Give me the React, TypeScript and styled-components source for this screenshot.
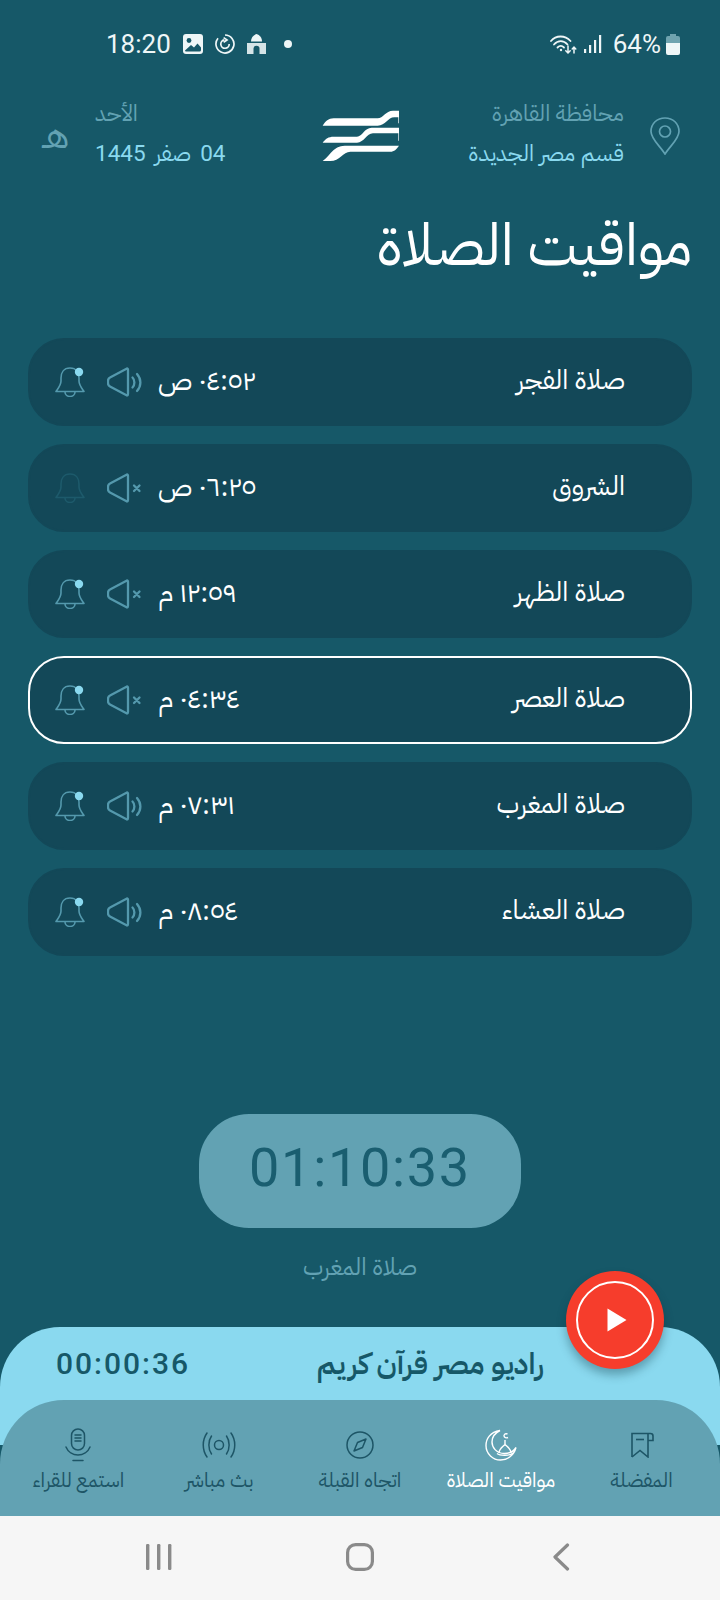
import React from 'react';
import styled, { createGlobalStyle } from 'styled-components';

const ARABIC = '"IBM Plex Sans Arabic", "Noto Sans Arabic", "DejaVu Sans", sans-serif';

const colors = {
  bg: '#165868',
  row: '#134858',
  sky: '#8ad9ef',
  muted: '#62a2b3',
  icon: '#5499ad',
};

const GlobalStyle = createGlobalStyle`
  html, body {
    margin: 0;
    padding: 0;
    background: ${colors.bg};
  }
  * {
    box-sizing: border-box;
  }
`;

const Page = styled.div`
  width: 720px;
  height: 1600px;
  background: ${colors.bg};
  display: flex;
  flex-direction: column;
  overflow: hidden;
  font-family: ${ARABIC};
`;

const StatusBar = styled.div`
  height: 86px;
  padding: 2px 40px 0 106px;
  display: flex;
  align-items: center;
  justify-content: space-between;
  color: #eef6f7;
  font-family: Roboto, sans-serif;
  font-size: 26px;
`;

const StatusGroup = styled.div`
  display: flex;
  align-items: center;
  gap: ${(p: { $gap: number }) => p.$gap}px;
`;

const StatusDot = styled.span`
  width: 8px;
  height: 8px;
  margin-left: 6px;
  border-radius: 50%;
  background: #eef6f7;
`;

const BatteryText = styled.span`
  margin: 0 -2px 0 4px;
`;

const Header = styled.header`
  height: 100px;
  padding: 0 40px 0 42px;
  display: grid;
  grid-template-columns: 1fr 80px 1fr;
  align-items: center;
`;

const HeaderSide = styled.div<{ $end?: boolean }>`
  display: flex;
  align-items: center;
  justify-content: ${(p) => (p.$end ? 'flex-end' : 'flex-start')};
  gap: 26px;
`;

const HijriMark = styled.span`
  color: ${colors.muted};
  font-size: 36px;
  line-height: 40px;
  width: 27px;
  direction: rtl;
`;

const HeaderText = styled.div<{ $end?: boolean }>`
  direction: rtl;
  display: flex;
  flex-direction: column;
  gap: 12px;
  margin-top: -7px;
  align-items: ${(p) => (p.$end ? 'flex-start' : 'flex-end')};
`;

const HeaderLine = styled.div<{ $sky?: boolean; $spaced?: boolean }>`
  font-family: Roboto, ${ARABIC};
  font-size: 22.5px;
  line-height: 28px;
  white-space: nowrap;
  word-spacing: ${(p) => (p.$spaced ? 3.5 : 0)}px;
  color: ${(p) => (p.$sky ? colors.sky : colors.muted)};
`;

const Title = styled.h1`
  margin: 25px 0 0;
  padding: 0 28px;
  direction: rtl;
  color: #fff;
  font-size: 58px;
  font-weight: 400;
  line-height: 70px;
`;

const PrayerList = styled.div`
  margin-top: 57px;
  padding: 0 28px;
  display: flex;
  flex-direction: column;
  gap: 18px;
`;

const PrayerRow = styled.div<{ $active?: boolean }>`
  height: 88px;
  border-radius: 36px;
  background: ${colors.row};
  border: 2px solid ${(p) => (p.$active ? '#fff' : colors.row)};
  padding: 0 65px 0 25px;
  display: flex;
  align-items: center;
`;

const RowIcons = styled.div`
  display: flex;
  align-items: center;
  gap: 22px;
`;

const PrayerTime = styled.div`
  margin-left: 15px;
  padding-bottom: 4px;
  direction: rtl;
  color: #fff;
  font-size: 27.5px;
  white-space: nowrap;
`;

const PrayerName = styled.div`
  margin-left: auto;
  padding-bottom: 4px;
  direction: rtl;
  color: #fff;
  font-size: 27px;
  white-space: nowrap;
`;

const CountdownWrap = styled.div`
  margin-top: 158px;
  display: flex;
  flex-direction: column;
  align-items: center;
`;

const Countdown = styled.div`
  width: 322px;
  height: 114px;
  border-radius: 50px;
  background: ${colors.muted};
  color: #1a5e70;
  font-family: Roboto, sans-serif;
  font-size: 54px;
  letter-spacing: 1.7px;
  display: flex;
  justify-content: center;
  padding-top: 22px;
`;

const CountdownLabel = styled.div`
  margin-top: 21px;
  direction: rtl;
  color: ${colors.muted};
  font-size: 24px;
`;

const Footer = styled.div`
  margin-top: auto;
  position: relative;
`;

const RadioPanel = styled.div`
  height: 118px;
  border-radius: 60px 60px 0 0;
  background: ${colors.sky};
  padding: 12px 176px 0 56px;
  display: flex;
  align-items: flex-start;
  justify-content: space-between;
  color: ${colors.bg};
`;

const RadioClock = styled.div`
  font-family: Roboto, sans-serif;
  font-size: 30px;
  font-weight: 500;
  letter-spacing: 2px;
  line-height: 50px;
`;

const RadioTitle = styled.div`
  direction: rtl;
  font-size: 29.5px;
  font-weight: 600;
  line-height: 50px;
  white-space: nowrap;
`;

const PlayButton = styled.div`
  position: absolute;
  left: 566px;
  top: -56px;
  width: 98px;
  height: 98px;
  border-radius: 50%;
  background: #f63d2c;
  box-shadow: 0 6px 10px rgba(10, 50, 60, 0.35);
  display: flex;
  align-items: center;
  justify-content: center;
`;

const PlayRing = styled.div`
  width: 78px;
  height: 78px;
  border-radius: 50%;
  border: 2px solid #fff;
  padding-left: 4px;
  display: flex;
  align-items: center;
  justify-content: center;
`;

const TabPanel = styled.nav`
  height: 116px;
  margin-top: -45px;
  position: relative;
  border-radius: 64px 64px 0 0;
  background: ${colors.muted};
  padding: 27px 8px 0;
  display: grid;
  grid-template-columns: repeat(5, 1fr);
`;

const Tab = styled.div<{ $active?: boolean }>`
  display: flex;
  flex-direction: column;
  align-items: center;
  color: ${(p) => (p.$active ? '#fff' : '#1d5566')};
`;

const TabIcon = styled.div`
  height: 36px;
  display: flex;
  align-items: center;
  justify-content: center;
`;

const TabLabel = styled.div`
  margin-top: 4px;
  direction: rtl;
  font-size: 20px;
  line-height: 26px;
  white-space: nowrap;
`;

const SystemNav = styled.div`
  height: 84px;
  background: #f6f6f6;
  padding-bottom: 2px;
  display: grid;
  grid-template-columns: repeat(3, 201px);
  justify-content: center;
  align-items: center;
  justify-items: center;
`;

const ImageIcon = () => (
  <svg width="20" height="20" viewBox="0 0 20 20">
    <rect width="20" height="20" rx="3" fill="#eef6f7" />
    <circle cx="6" cy="6.5" r="2.4" fill={colors.bg} />
    <path d="M2 16.5 L8 11 L11 13.5 L14.5 9.5 L18 13.5 V16 Q18 17.5 16.5 17.5 H3 Q2 17.5 2 16.5Z" fill={colors.bg} />
  </svg>
);

const SyncIcon = () => (
  <svg width="20" height="20" viewBox="0 0 20 20" fill="none" stroke="#eef6f7" strokeWidth="1.7">
    <path d="M10 1 A9 9 0 1 1 3 4.3" />
    <path d="M14.2 10 A4.2 4.2 0 1 1 9.4 5.9" />
    <path d="M8.6 3.6 L12 5.9 L8.6 8.2" />
  </svg>
);

const MosqueIcon = () => (
  <svg width="19" height="20" viewBox="0 0 19 20">
    <path d="M9.5 0 C6 1 4 4 4 7.5 H15 C15 4 13 1 9.5 0Z" fill="#eef6f7" />
    <path d="M0 9 H19 V20 H12.5 V14.5 Q12.5 11.8 9.5 11.8 Q6.5 11.8 6.5 14.5 V20 H0Z" fill="#d5e4e7" />
  </svg>
);

const WifiIcon = () => (
  <svg width="27" height="19" viewBox="0 0 27 19" fill="none" stroke="#eef6f7" strokeWidth="1.8" strokeLinecap="round">
    <path d="M1 6 C6 0 15 0 20.5 6" />
    <path d="M4 9.5 C8 5 13.5 5 17.5 9.5" />
    <path d="M7.5 12.5 C9.5 10.5 12 10.5 14 12.5" />
    <circle cx="11" cy="15" r="1.2" fill="#eef6f7" stroke="none" />
    <path d="M18 11 V18 M15.8 15.8 L18 18 L20.2 15.8" strokeWidth="1.5" />
    <path d="M24 18 V12 M22.2 14 L24 12 L25.8 14" strokeWidth="1.5" />
  </svg>
);

const SignalIcon = () => (
  <svg width="18" height="18" viewBox="0 0 18 18" fill="#eef6f7">
    <rect x="0" y="14" width="2.2" height="4" />
    <rect x="5" y="10" width="2.2" height="8" />
    <rect x="10" y="5" width="2.2" height="13" />
    <rect x="15" y="0" width="2.2" height="18" />
  </svg>
);

const BatteryIcon = () => (
  <svg width="14" height="21" viewBox="0 0 14 21">
    <path d="M4 0 H10 V2 H12 Q14 2 14 4 V9 H0 V4 Q0 2 2 2 H4Z" fill="#6fa3af" />
    <path d="M0 9 H14 V19 Q14 21 12 21 H2 Q0 21 0 19Z" fill="#eef6f7" />
  </svg>
);

const PinIcon = () => (
  <svg width="30" height="38" viewBox="0 0 30 38" fill="none" stroke={colors.muted} strokeWidth="1.7">
    <path d="M15 37 C10 29 1 22 1 14.5 C1 6.5 7 1 15 1 C23 1 29 6.5 29 14.5 C29 22 20 29 15 37Z" />
    <circle cx="15" cy="14.5" r="5.5" />
  </svg>
);

const Logo = () => (
  <svg width="80" height="52" viewBox="66 60 232 156" fill="#fff">
    <path d="M67 107 C76 94 84 85 100 85 H232 C248 85 256 62 278 62 H296 V100 H294 V82 H282 C262 82 256 107 232 107Z" />
    <path d="M67 158 C76 146 84 140 100 140 H170 C186 140 192 113 214 113 H296 V152 H294 V130 H218 C198 130 192 158 170 158Z" />
    <path d="M67 213 C80 205 88 190 100 180 C112 170 120 167 140 167 H296 C288 178 282 185 270 185 H150 C128 185 118 213 90 213Z" />
  </svg>
);

const BellIcon = ({ off }: { off?: boolean }) => {
  const stroke = off ? '#1d5a6b' : colors.icon;
  return (
    <svg width="30" height="30" viewBox="0 0 30 30" fill="none" stroke={stroke} strokeWidth="1.6" strokeLinecap="round">
      <path d="M15 1 C8.5 1 6 6 6 11 V14 C6 18 3.5 21 1 24.5 H29 C26.5 21 24 18 24 14 V11 C24 6 21.5 1 15 1Z" strokeLinejoin="round" />
      <path d="M10 25 A5 4.5 0 0 0 20 25" />
      {!off && <circle cx="24" cy="5" r="4.2" fill={colors.sky} stroke="none" />}
    </svg>
  );
};

const SpeakerIcon = ({ muted }: { muted?: boolean }) => (
  <svg width="36" height="30" viewBox="0 0 36 30" fill="none" stroke={colors.icon} strokeWidth="2.3" strokeLinecap="round">
    <path d="M20 1.5 L3 10.5 Q1 11.5 1 14 V16 Q1 18.5 3 19.5 L20 28.5 Q21 28.5 21 27 V3 Q21 1.5 20 1.5Z" strokeLinejoin="round" />
    {muted ? (
      <path d="M27 12.5 L32.5 18 M32.5 12.5 L27 18" />
    ) : (
      <>
        <path d="M25.5 10.5 C28 13 28 18 25.5 20.5" />
        <path d="M30 7 C34.5 12 34.5 19 30 24" />
      </>
    )}
  </svg>
);

const BookmarkIcon = () => (
  <svg width="24" height="26" viewBox="0 0 24 26" fill="none" stroke="currentColor" strokeWidth="1.6">
    <path d="M2 25 V1.5 H20.5 Q23 1.5 23 4 V8.5 H18" />
    <path d="M18 1.5 V25 L10 18.5 L2 25" />
    <path d="M6 7.5 H14" />
  </svg>
);

const MoonIcon = () => (
  <svg width="32" height="32" viewBox="0 0 32 32" fill="none" stroke="currentColor" strokeWidth="1.4">
    <path d="M15 1.5 C5 3 1 10 1 16.5 C1 25 8 31 15.5 31 C23 31 29 26 31 18.5 C28 23 24 24.5 19.5 24.5 C11 24.5 7 18 7 13 C7 8 10 4 15 1.5Z" />
    <path d="M14 24 C14 20 17 18.5 20 15.5 C23 18.5 26 20 26 24" />
    <path d="M12 24.5 C15 27 25 27 28 24" />
    <path d="M20 15 V11 M22.5 5 C20 4 18 6 19.5 8 C21 9.5 23 8.5 23 8.5" />
  </svg>
);

const CompassIcon = () => (
  <svg width="28" height="28" viewBox="0 0 28 28" fill="none" stroke="currentColor" strokeWidth="1.5">
    <circle cx="14" cy="14" r="13" />
    <path d="M20 8 L16.5 16.5 L8 20 L11.5 11.5Z" strokeLinejoin="round" />
  </svg>
);

const BroadcastIcon = () => (
  <svg width="34" height="26" viewBox="0 0 34 26" fill="none" stroke="currentColor" strokeWidth="1.5" strokeLinecap="round">
    <circle cx="17" cy="13" r="4.5" />
    <path d="M9.5 4 C6 9 6 17 9.5 22" />
    <path d="M24.5 4 C28 9 28 17 24.5 22" />
    <path d="M5 1 C0 8 0 18 5 25" />
    <path d="M29 1 C34 8 34 18 29 25" />
  </svg>
);

const MicIcon = () => (
  <svg width="26" height="34" viewBox="0 0 26 34" fill="none" stroke="currentColor" strokeWidth="1.5" strokeLinecap="round">
    <rect x="6.5" y="1" width="13" height="21" rx="6.5" />
    <path d="M10 7 H16 M10 10 H16 M10 13 H16" />
    <path d="M1 19 C3 24 8 27 13 27 C18 27 23 24 25 19" />
    <path d="M8 32.5 H18" />
  </svg>
);

const PlayIcon = () => (
  <svg width="20" height="24" viewBox="0 0 20 24">
    <path d="M0.5 0.5 L19.5 12 L0.5 23.5Z" fill="#fff" />
  </svg>
);

const prayers = [
  { name: 'صلاة الفجر', time: '٠٤:٥٢ ص', sound: true, bell: true },
  { name: 'الشروق', time: '٠٦:٢٥ ص', sound: false, bell: false },
  { name: 'صلاة الظهر', time: '١٢:٥٩ م', sound: false, bell: true },
  { name: 'صلاة العصر', time: '٠٤:٣٤ م', sound: false, bell: true, active: true },
  { name: 'صلاة المغرب', time: '٠٧:٣١ م', sound: true, bell: true },
  { name: 'صلاة العشاء', time: '٠٨:٥٤ م', sound: true, bell: true },
];

const tabs = [
  { label: 'استمع للقراء', icon: <MicIcon /> },
  { label: 'بث مباشر', icon: <BroadcastIcon /> },
  { label: 'اتجاه القبلة', icon: <CompassIcon /> },
  { label: 'مواقيت الصلاة', icon: <MoonIcon />, active: true },
  { label: 'المفضلة', icon: <BookmarkIcon /> },
];

const App: React.FC = () => (
  <Page>
    <GlobalStyle />
    <StatusBar>
      <StatusGroup $gap={12}>
        <span>18:20</span>
        <ImageIcon />
        <SyncIcon />
        <MosqueIcon />
        <StatusDot />
      </StatusGroup>
      <StatusGroup $gap={7}>
        <WifiIcon />
        <SignalIcon />
        <BatteryText>64%</BatteryText>
        <BatteryIcon />
      </StatusGroup>
    </StatusBar>

    <Header>
      <HeaderSide>
        <HijriMark>هـ</HijriMark>
        <HeaderText>
          <HeaderLine>الأحد</HeaderLine>
          <HeaderLine $sky $spaced>04 صفر 1445</HeaderLine>
        </HeaderText>
      </HeaderSide>
      <Logo />
      <HeaderSide $end>
        <HeaderText $end>
          <HeaderLine>محافظة القاهرة</HeaderLine>
          <HeaderLine $sky>قسم مصر الجديدة</HeaderLine>
        </HeaderText>
        <PinIcon />
      </HeaderSide>
    </Header>

    <Title>مواقيت الصلاة</Title>

    <PrayerList>
      {prayers.map((p) => (
        <PrayerRow key={p.name} $active={p.active}>
          <RowIcons>
            <BellIcon off={!p.bell} />
            <SpeakerIcon muted={!p.sound} />
          </RowIcons>
          <PrayerTime>{p.time}</PrayerTime>
          <PrayerName>{p.name}</PrayerName>
        </PrayerRow>
      ))}
    </PrayerList>

    <CountdownWrap>
      <Countdown>01:10:33</Countdown>
      <CountdownLabel>صلاة المغرب</CountdownLabel>
    </CountdownWrap>

    <Footer>
      <PlayButton>
        <PlayRing>
          <PlayIcon />
        </PlayRing>
      </PlayButton>
      <RadioPanel>
        <RadioClock>00:00:36</RadioClock>
        <RadioTitle>راديو مصر قرآن كريم</RadioTitle>
      </RadioPanel>
      <TabPanel>
        {tabs.map((t) => (
          <Tab key={t.label} $active={t.active}>
            <TabIcon>{t.icon}</TabIcon>
            <TabLabel>{t.label}</TabLabel>
          </Tab>
        ))}
      </TabPanel>
    </Footer>

    <SystemNav>
      <svg width="26" height="28" viewBox="0 0 26 28" fill="#8a8a8a">
        <rect x="0" y="1" width="3.4" height="26" rx="1.2" />
        <rect x="11" y="1" width="3.4" height="26" rx="1.2" />
        <rect x="22" y="1" width="3.4" height="26" rx="1.2" />
      </svg>
      <svg width="28" height="28" viewBox="0 0 28 28" fill="none" stroke="#8a8a8a" strokeWidth="3.2">
        <rect x="1.6" y="1.6" width="24.8" height="24.8" rx="8" />
      </svg>
      <svg width="18" height="28" viewBox="0 0 18 28" fill="none" stroke="#8a8a8a" strokeWidth="3.2" strokeLinecap="round" strokeLinejoin="round">
        <path d="M15.5 2 L3 14 L15.5 26" />
      </svg>
    </SystemNav>
  </Page>
);

export default App;
